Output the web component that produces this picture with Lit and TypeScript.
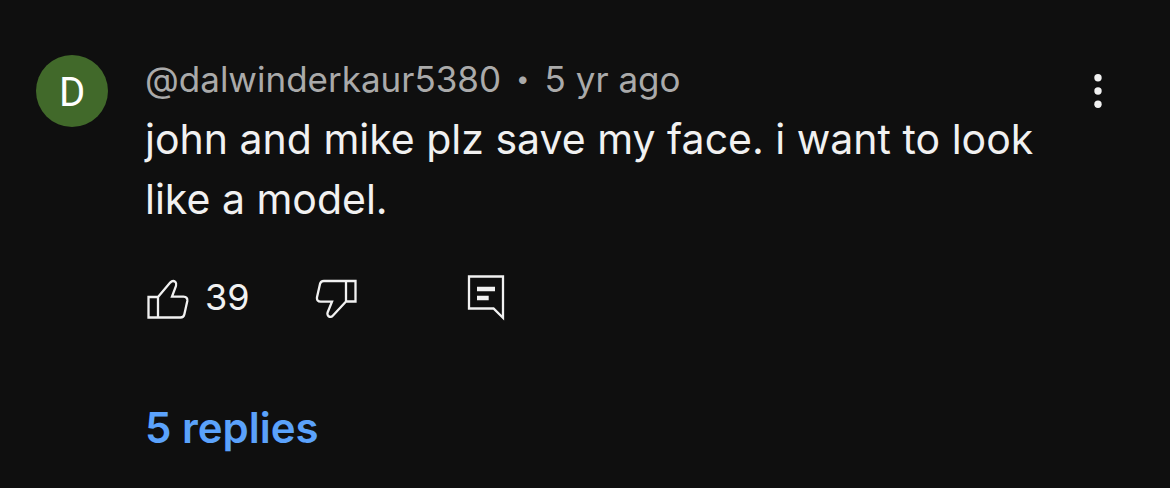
import { LitElement, html, css } from "lit";
import { customElement } from "lit/decorators.js";

@customElement("app-root")
export class AppRoot extends LitElement {
  static styles = css`
    :host { display: block; min-height: 100vh; background: #0f0f0f; color: #f1f1f1; font-family: Inter, "Liberation Sans", sans-serif; }
    * { box-sizing: border-box; }
    button { background: none; border: 0; padding: 0; margin: 0; color: inherit; font: inherit; cursor: pointer; display: flex; align-items: center; }
    svg { display: block; }
    .comment { display: flex; padding: 55px 50px 32px 36px; }
    .avatar { flex: none; width: 72px; height: 72px; padding-top: 2px; border-radius: 50%; background: #41692a; color: #fff; font-family: Roboto, sans-serif; font-size: 40px; display: flex; align-items: center; justify-content: center; text-decoration: none; }
    .body { flex: 1; min-width: 0; margin-left: 37px; }
    .meta { display: flex; gap: 15px; font-size: 35px; line-height: 48px; color: #aaa; }
    .meta a { color: inherit; text-decoration: none; }
    .dot { font-size: 24px; }
    .text { margin: 6px 0 0; font-size: 41px; line-height: 60px; }
    .actions { display: flex; align-items: center; margin-top: 44px; height: 48px; }
    .like { gap: 16px; font-size: 36px; }
    .dislike { margin-left: 64px; }
    .reply { margin-left: 108px; }
    .actions svg { stroke-width: 2.3; }
    .replies { margin-top: 81px; font-size: 42px; line-height: 52px; font-weight: 600; color: #5ba2fb; }
    .more { flex: none; width: 44px; height: 72px; justify-content: center; }
  `;

  render() {
    return html`
      <article class="comment">
        <a class="avatar" href="#channel" aria-label="dalwinderkaur5380">D</a>
        <div class="body">
          <div class="meta"><a href="#channel">@dalwinderkaur5380</a><span class="dot">•</span><span>5 yr ago</span></div>
          <p class="text">john and mike plz save my face. i want to look like a model.</p>
          <div class="actions">
            <button class="like" aria-label="Like, 39">
              <svg width="44" height="44" viewBox="0 0 44 44" fill="none" stroke="currentColor"><path d="M3.5 22H13V42.5H3.5Z M13 22L25.2 7.6Q27.8 4.8 30.3 6.8Q31.8 8.3 31 11L27 21.7H38.5Q42.8 21.9 42.3 26L39.3 39.5Q38.6 42.5 35.5 42.5H13"/></svg>
              <span>39</span>
            </button>
            <button class="dislike" aria-label="Dislike">
              <svg width="44" height="44" viewBox="0 0 44 44" fill="none" stroke="currentColor"><path d="M41.5 26.5H32V6H41.5Z M32 26.5L19 40.5Q16.8 43 14.3 41Q13 39.5 13.6 37.5L18 26.7H6.7Q2.5 26.5 3 22.3L6 9Q6.7 6 9.8 6H32"/></svg>
            </button>
            <button class="reply" aria-label="Reply">
              <svg width="40" height="48" viewBox="0 0 40 48" fill="none" stroke="currentColor"><path d="M3 3.5H37V44.8L27.5 35.5H3Z"/><path d="M11 16H29M11 25H22.7" stroke-width="4.6"/></svg>
            </button>
          </div>
          <button class="replies">5 replies</button>
        </div>
        <button class="more" aria-label="More actions">
          <svg width="10" height="36" viewBox="0 0 10 36" fill="currentColor"><circle cx="5" cy="4.7" r="3.7"/><circle cx="5" cy="18" r="3.7"/><circle cx="5" cy="31.3" r="3.7"/></svg>
        </button>
      </article>
    `;
  }
}
